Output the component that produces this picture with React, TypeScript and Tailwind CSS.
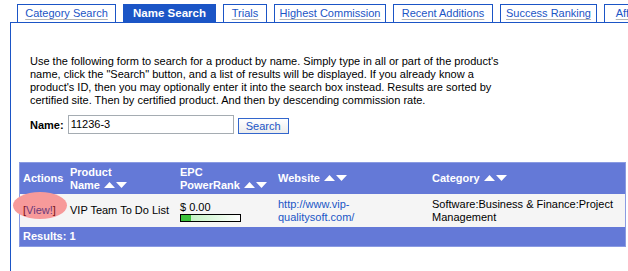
import React from "react";

const tabs = [
  { label: "Category Search", w: 99 },
  { label: "Name Search", w: 93, active: true },
  { label: "Trials", w: 44 },
  { label: "Highest Commission", w: 112 },
  { label: "Recent Additions", w: 100 },
  { label: "Success Ranking", w: 97 },
  { label: "Affiliate Programs", w: 110 },
];

function Sort() {
  return (
    <svg width="24" height="6" viewBox="0 0 24 6" className="inline-block ml-[4px] align-[1px]">
      <polygon points="0,6 5.5,0 11,6" fill="#ffffff" />
      <polygon points="12,0 23,0 17.5,6" fill="#ffffff" />
    </svg>
  );
}

export default function App() {
  return (
    <div className="w-[628px] h-[271px] overflow-hidden bg-white flex flex-col font-['Liberation_Sans',Arial,sans-serif] text-[11px] text-black">
      <div className="flex gap-[7px] pl-[17px] pt-[4px] h-[22px] shrink-0 whitespace-nowrap">
        {tabs.map((t) => (
          <div
            key={t.label}
            style={{ width: t.w }}
            className={
              t.active
                ? "shrink-0 h-[18px] bg-[#1b55c6] border border-b-0 border-[#1b55c6] flex items-center justify-center text-white font-bold text-[11.5px]"
                : "shrink-0 h-[18px] bg-white border border-b-0 border-[#1b55c6] flex items-center justify-center text-[#1b55c6] underline decoration-[#b4b4b4] underline-offset-[2px]"
            }
          >
            {t.label}
          </div>
        ))}
      </div>
      <div className="ml-[10px] flex-1 border-l border-t border-[#1b55c6] flex flex-col">
        <p className="pl-[19px] pt-[32px] leading-[13px] whitespace-nowrap">
          Use the following form to search for a product by name. Simply type in all or part of the product's
          <br />
          name, click the "Search" button, and a list of results will be displayed. If you already know a
          <br />
          product's ID, then you may optionally enter it into the search box instead. Results are sorted by
          <br />
          certified site. Then by certified product. And then by descending commission rate.
        </p>
        <div className="flex items-end pl-[19px] mt-[9px] h-[18px]">
          <span className="font-bold mr-[4px] mb-[1px]">Name:</span>
          <div className="w-[166px] h-[19px] border border-[#a5acb2] bg-white pl-[2px] leading-[16px]">11236-3</div>
          <button className="ml-[4px] w-[51px] h-[16px] border border-[#3366cc] bg-gradient-to-b from-white to-[#ececec] text-[#1b55c6] leading-[13px] text-[11px]">
            Search
          </button>
        </div>
        <div className="ml-[8px] mt-[28px] w-[607px] border border-[#8a9be2] bg-[#6479d7]">
          <div className="grid grid-cols-[46px_110px_99px_154px_1fr] h-[31px] text-white font-bold leading-[13px] items-center">
            <div className="pl-[3px]">Actions</div>
            <div className="pl-[4px]">
              Product
              <br />
              Name
              <Sort />
            </div>
            <div className="pl-[4px]">
              EPC
              <br />
              PowerRank
              <Sort />
            </div>
            <div className="pl-[3px]">
              Website
              <Sort />
            </div>
            <div className="pl-[3px]">
              Category
              <Sort />
            </div>
          </div>
          <div className="grid grid-cols-[46px_110px_99px_154px_1fr] h-[33px] bg-[#f5f5f5] items-center leading-[13px]">
            <div className="relative pl-[3px]">
              <div className="absolute left-[-7px] top-[-12px] w-[54px] h-[27px] rounded-[50%] bg-[#f79a9a]" />
              <span className="relative text-[#7a1010]">
                [<span className="text-[#6b3a7a]">View!</span>]
              </span>
            </div>
            <div className="pl-[4px] whitespace-nowrap">VIP Team To Do List</div>
            <div className="pl-[4px] pt-[2px]">
              <div className="leading-[11px]">$ 0.00</div>
              <div className="mt-[1px] w-[61px] h-[8px] border border-black bg-gradient-to-r from-[#b8f0b8] to-white flex">
                <div className="w-[10px] h-full bg-[#3cc23c]" />
              </div>
            </div>
            <div className="pl-[3px] text-[#1b55c6]">
              http://www.vip-
              <br />
              qualitysoft.com/
            </div>
            <div className="pl-[3px] whitespace-nowrap">
              Software:Business &amp; Finance:Project
              <br />
              Management
            </div>
          </div>
          <div className="h-[19px] pl-[3px] flex items-center text-white font-bold">Results: 1</div>
        </div>
      </div>
    </div>
  );
}
